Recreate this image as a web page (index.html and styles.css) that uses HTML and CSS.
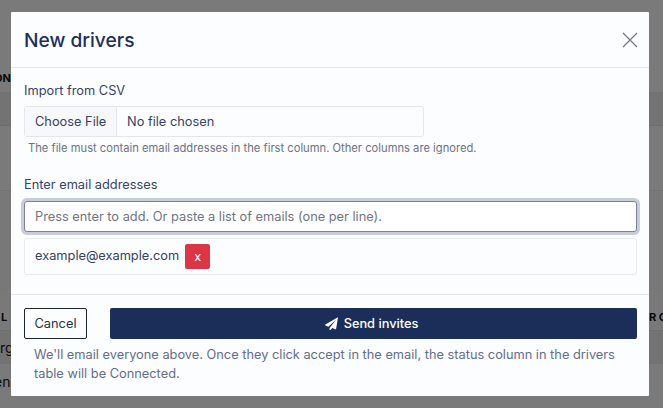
FILE: index.html
```html
<!DOCTYPE html>
<html lang="en">
<head>
<meta charset="utf-8">
<title>New drivers</title>
<link rel="stylesheet" href="styles.css">
</head>
<body>
<div class="page">
  <div class="bg-row bg-top"><span class="bg-left">ON</span></div>
  <div class="bg-row bg-band1"></div>
  <div class="bg-row bg-band2"></div>
  <div class="bg-row bg-band3"></div>
  <div class="bg-row bg-head2"><span class="bg-l">L</span><span class="bg-right">ER C</span></div>
  <div class="bg-row bg-data1"><span>rg</span></div>
  <div class="bg-row bg-data2"><span class="bg-left">ene</span></div>
</div>
<div class="backdrop"></div>
<main class="modal">
  <header class="modal-header">
    <h1>New drivers</h1>
    <svg class="close" viewBox="0 0 16 16" aria-label="Close"><path d="M1 1l14 14M15 1L1 15"/></svg>
  </header>
  <section class="modal-body">
    <div class="label">Import from CSV</div>
    <div class="file">
      <div class="file-btn">Choose File</div>
      <div class="file-name">No file chosen</div>
    </div>
    <div class="hint">The file must contain email addresses in the first column. Other columns are ignored.</div>
    <div class="label label-email">Enter email addresses</div>
    <div class="input">Press enter to add. Or paste a list of emails (one per line).</div>
    <div class="chips">
      <span class="chip-text">example@example.com</span>
      <span class="remove">x</span>
    </div>
  </section>
  <footer class="modal-footer">
    <div class="actions">
      <div class="cancel">Cancel</div>
      <div class="send">
        <svg viewBox="0 0 16 16"><path d="M15.900.2.500 9.100c-.6.300-.5 1.200.1 1.400l3.500 1.500 9.600-8.500L5.600 13.400v2.100c0 .6.800.9 1.200.4l2.100-2.500 3.800 1.600c.4.200.9-.1 1-.6L16 .4z"/></svg>
        <span>Send invites</span>
      </div>
    </div>
    <p class="note">We'll email everyone above. Once they click accept in the email, the status column in the drivers table will be Connected.</p>
  </footer>
</main>
</body>
</html>
```
FILE: styles.css
```css
* { box-sizing: border-box; }
html, body { margin: 0; height: 408px; overflow: hidden; }
body { font-family: Inter, "Liberation Sans", sans-serif; background: #fff; position: relative; }

.page { display: flex; flex-direction: column; height: 408px; font-size: 11px; font-weight: 700; color: #111; overflow: hidden; }
.bg-row { display: flex; justify-content: space-between; align-items: center; white-space: nowrap; }
.bg-top { height: 92px; background: #f4f5f6; align-items: flex-start; padding-top: 71px; }
.bg-left { margin-left: -6px; }
.bg-l { margin-left: 1px; }
.bg-right { margin-right: -4px; }
.bg-band1 { height: 33px; background: #e6e6e6; }
.bg-band2 { height: 65px; background: #f4f4f4; border-top: 1px solid #dddddd; }
.bg-band3 { height: 100px; background: #f0f0f0; border-top: 1px solid #e4e4e4; }
.bg-head2 { height: 40px; background: #f2f2f2; align-items: flex-start; padding-top: 20px; }
.bg-data1 { height: 34px; background: #e6e6e6; border-top: 1px solid #dddddd; font-weight: 400; font-size: 14px; }
.bg-data2 { height: 44px; align-items: flex-start; padding-top: 9px; font-weight: 400; font-size: 14px; background: #f4f4f4; }

.backdrop { position: absolute; inset: 0; background: rgba(0, 0, 0, .5); }

.modal {
  position: absolute; left: 11px; top: 12px; width: 638px; height: 384px;
  background: #fcfdff; color: #1b2e5a;
  display: flex; flex-direction: column;
  border-radius: 1px;
}
.modal-header { height: 56px; border-bottom: 1px solid #e3e6ea; display: flex; align-items: center; justify-content: space-between; padding: 0 11px 0 13px; }
h1 { margin: 0; font-size: 19.2px; font-weight: 500; line-height: 26px; color: #1f2f5c; }
.close { width: 16px; height: 16px; fill: none; stroke: #777a7f; stroke-width: 1.300; }

.modal-body { padding: 15px 12px 0 13px; height: 227px; border-bottom: 1px solid #e3e6ea; font-size: 12.8px; }
.label { line-height: 16px; color: #36436a; }
.file { display: flex; margin-top: 7px; width: 400px; height: 31px; border: 1px solid #e3e6ea; border-radius: 3px; line-height: 29px; color: #374263; }
.file-btn { width: 92px; padding-left: 10px; background: #f7f8f9; border-right: 1px solid #e3e6ea; }
.file-name { padding-left: 10px; }
.hint { font-size: 11.2px; line-height: 14px; margin-top: 4px; padding-left: 4px; color: #6c7186; }
.label-email { margin-top: 22px; }
.input { margin-top: 8px; height: 31px; border: 1px solid #7c809a; border-radius: 3px; box-shadow: 0 0 0 3px #c9ccdc; padding-left: 10px; line-height: 29px; color: #6f7482; background: #fff; }
.chips { margin-top: 6px; height: 37px; border: 1px solid #e8eaee; border-radius: 3px; padding-left: 10px; display: flex; align-items: center; gap: 6px; color: #36415f; }
.chip-text { margin-top: -2px; }
.remove { width: 25px; height: 25px; background: #dc3545; color: #fff; border-radius: 2px; display: flex; align-items: center; justify-content: center; font-size: 12.8px; }

.modal-footer { padding: 13px 12px 0 13px; font-size: 12.8px; }
.actions { display: flex; gap: 23px; }
.cancel { width: 63px; height: 31px; border: 1px solid #1d2433; border-radius: 2px; display: flex; align-items: center; justify-content: center; color: #2a3145; }
.send { flex: 1; height: 31px; padding-right: 4px; background: #1b2e5a; border-radius: 2px; color: #fff; font-weight: 500; display: flex; align-items: center; justify-content: center; gap: 6px; }
.send svg { width: 13px; height: 13px; fill: #fff; }
.note { margin: 6px 0 0; padding: 0 16px 0 10px; line-height: 19px; color: #646d8a; }
```
